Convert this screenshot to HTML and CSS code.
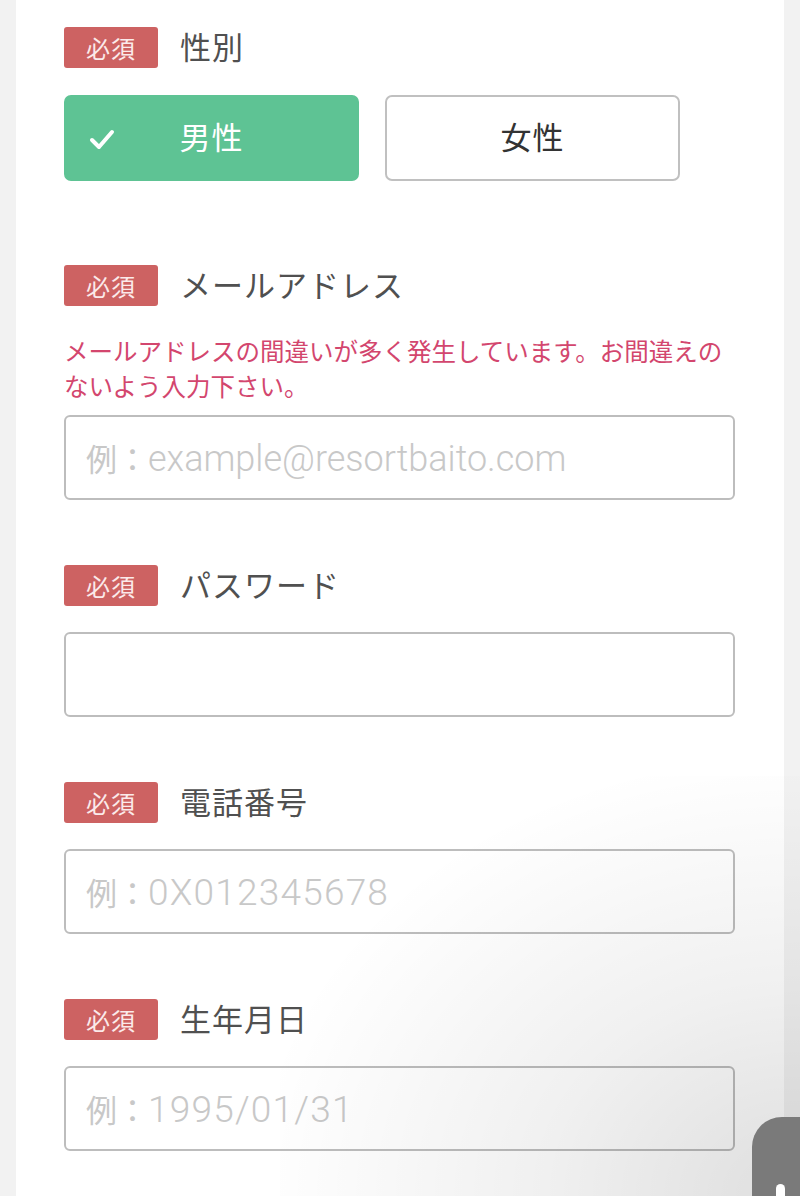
FILE: index.html
```html
<!DOCTYPE html>
<html lang="ja">
<head>
<meta charset="utf-8">
<title>会員登録</title>
<link rel="stylesheet" href="styles.css">
</head>
<body>
<div class="card">
  <div class="field field-gender">
    <div class="label-row"><span class="badge">必須</span><span class="label">性別</span></div>
    <div class="gender">
      <div class="gbtn gbtn-on">
        <svg class="check" viewBox="0 0 26 22" width="26" height="22"><path d="M3 12 L10 19 L23 4" fill="none" stroke="#fff" stroke-width="4" stroke-linecap="round" stroke-linejoin="round"/></svg>
        <span>男性</span>
      </div>
      <div class="gbtn"><span>女性</span></div>
    </div>
  </div>

  <div class="field">
    <div class="label-row"><span class="badge">必須</span><span class="label">メールアドレス</span></div>
    <p class="note">メールアドレスの間違いが多く発生しています。お間違えのないよう入力下さい。</p>
    <div class="input input-note"><span class="ph">例：<span class="lat">example@resortbaito.com</span></span></div>
  </div>

  <div class="field">
    <div class="label-row"><span class="badge">必須</span><span class="label">パスワード</span></div>
    <div class="input"></div>
  </div>

  <div class="field">
    <div class="label-row"><span class="badge">必須</span><span class="label">電話番号</span></div>
    <div class="input"><span class="ph">例：<span class="lat num">0X012345678</span></span></div>
  </div>

  <div class="field">
    <div class="label-row"><span class="badge">必須</span><span class="label">生年月日</span></div>
    <div class="input"><span class="ph">例：<span class="lat num">1995/01/31</span></span></div>
  </div>
</div>
<div class="shade"></div>
<div class="fab"><span class="fab-dot"></span></div>
</body>
</html>
```

FILE: styles.css
```css
html, body {
  margin: 0;
  padding: 0;
}
body {
  background: #f2f2f2;
  font-family: "Noto Sans CJK JP", "Noto Sans", sans-serif;
  height: 1196px;
  overflow: hidden;
  position: relative;
}
.card {
  margin: 0 16px;
  background: #fff;
  padding: 27px 49px 0 48px;
  min-height: 1196px;
  box-sizing: border-box;
}
.field {
  margin-bottom: 65px;
}
.field-gender {
  margin-bottom: 84px;
}
.label-row {
  display: flex;
  align-items: center;
  height: 41px;
}
.badge {
  display: flex;
  align-items: center;
  justify-content: center;
  width: 94px;
  height: 41px;
  background: #cd6262;
  color: #fbeaea;
  border-radius: 3px;
  font-size: 24px;
  letter-spacing: 1px;
  line-height: 1;
}
.label {
  margin-left: 22px;
  margin-top: -4px;
  font-size: 31px;
  color: #505050;
  letter-spacing: 1px;
  line-height: 1;
}
.gender {
  display: grid;
  grid-template-columns: 295px 295px;
  column-gap: 26px;
  margin-top: 27px;
}
.gbtn {
  height: 86px;
  box-sizing: border-box;
  border: 2px solid #c0c0c0;
  border-radius: 7px;
  background: #fff;
  display: flex;
  align-items: center;
  justify-content: center;
  padding-bottom: 5px;
  position: relative;
  font-size: 31px;
  color: #333;
  letter-spacing: 1px;
}
.gbtn-on {
  background: #5ec394;
  border-color: #5ec394;
  color: #fff;
}
.check {
  position: absolute;
  left: 23px;
  top: 31px;
}
.note {
  margin: 27px 0 12px;
  font-size: 24.5px;
  line-height: 35px;
  letter-spacing: 0;
  color: #d3466e;
}
.input {
  height: 85px;
  box-sizing: border-box;
  border: 2px solid #bdbdbd;
  border-radius: 6px;
  margin-top: 26px;
  display: flex;
  align-items: center;
  padding-left: 20px;
  padding-top: 2px;
  background: transparent;
}
.input-note {
  margin-top: 0;
}
.ph {
  font-size: 31px;
  color: #c8c8c8;
  line-height: 1;
  white-space: nowrap;
}
.lat {
  font-family: Roboto, "Liberation Sans", sans-serif;
  font-weight: 300;
  font-size: 36px;
  letter-spacing: 0;
}
.num {
  font-size: 37px;
  letter-spacing: 1.2px;
}
.shade {
  position: absolute;
  right: 0;
  bottom: 0;
  width: 520px;
  height: 420px;
  background: radial-gradient(ellipse at 100% 100%, rgba(0,0,0,0.13) 0%, rgba(0,0,0,0.06) 35%, rgba(0,0,0,0) 75%);
  pointer-events: none;
}
.fab {
  position: absolute;
  right: 0;
  bottom: 0;
  width: 48px;
  height: 79px;
  background: #7a7a7a;
  border-radius: 30px 0 0 0;
}
.fab-dot {
  position: absolute;
  left: 24px;
  top: 67px;
  width: 9px;
  height: 12px;
  background: #fff;
  border-radius: 5px 5px 0 0;
}
```
